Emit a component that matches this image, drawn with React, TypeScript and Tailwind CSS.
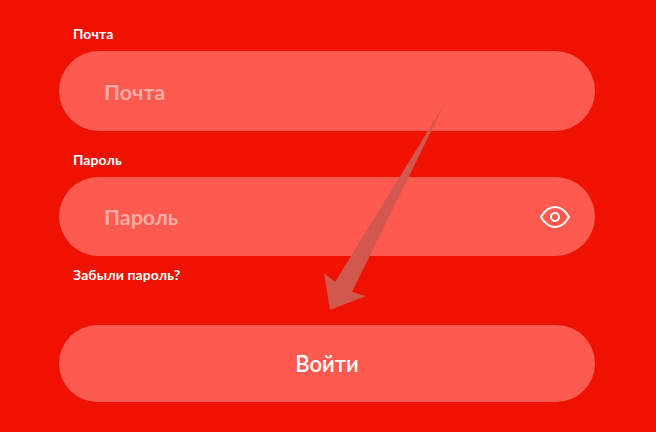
const font = { fontFamily: '"Lato", "Noto Sans", sans-serif' };

function EyeIcon() {
  return (
    <svg className="absolute right-[24px] top-[28px]" width="32" height="24" viewBox="0 0 32 24" fill="none" stroke="white" strokeWidth="2">
      <path d="M2 12C6 5 10.500 2 16 2C21.500 2 26 5 30 12C26 19 21.500 22 16 22C10.500 22 6 19 2 12Z" strokeLinejoin="round" />
      <circle cx="16" cy="12" r="4" />
    </svg>
  );
}

export default function App() {
  return (
    <div className="relative w-[656px] h-[432px] overflow-hidden bg-[#ef1200] pl-[59px] pt-[25px]" style={font}>
      <div className="w-[536px] flex flex-col">
        {/* Email */}
        <label className="pl-[14px] h-[26px] text-[14px] leading-[18px] font-bold tracking-[0.1px] text-white">Почта</label>
        <input
          placeholder="Почта"
          className="h-[80px] rounded-[40px] bg-[#ff5a4f] pl-[45px] pr-[60px] pt-[2px] text-[21.500px] font-bold text-white placeholder:text-[#ffaaa3] outline-none"
        />

        {/* Password */}
        <label className="pl-[14px] mt-[20px] h-[26px] text-[14px] leading-[18px] font-bold tracking-[0.1px] text-white">Пароль</label>
        <div className="relative">
          <input
            placeholder="Пароль"
            className="w-full h-[79px] rounded-[40px] bg-[#ff5a4f] pl-[45px] pr-[60px] text-[21.500px] font-bold text-white placeholder:text-[#ffaaa3] outline-none"
          />
          <EyeIcon />
        </div>
        <a className="pl-[14px] mt-[10px] h-[19px] text-[14px] leading-[18px] font-bold tracking-[0.1px] text-white">Забыли пароль?</a>

        {/* Submit */}
        <button className="mt-[40px] h-[77px] rounded-[40px] bg-[#ff5a4f] text-[22px] font-semibold text-white">Войти</button>
      </div>

      {/* Annotation arrow */}
      <svg className="absolute left-0 top-0 pointer-events-none" width="656" height="432" viewBox="0 0 656 432">
        <polygon points="445,103 352,292 366,296 330,310 324,273 335,282" fill="#d2574f" />
      </svg>
    </div>
  );
}
